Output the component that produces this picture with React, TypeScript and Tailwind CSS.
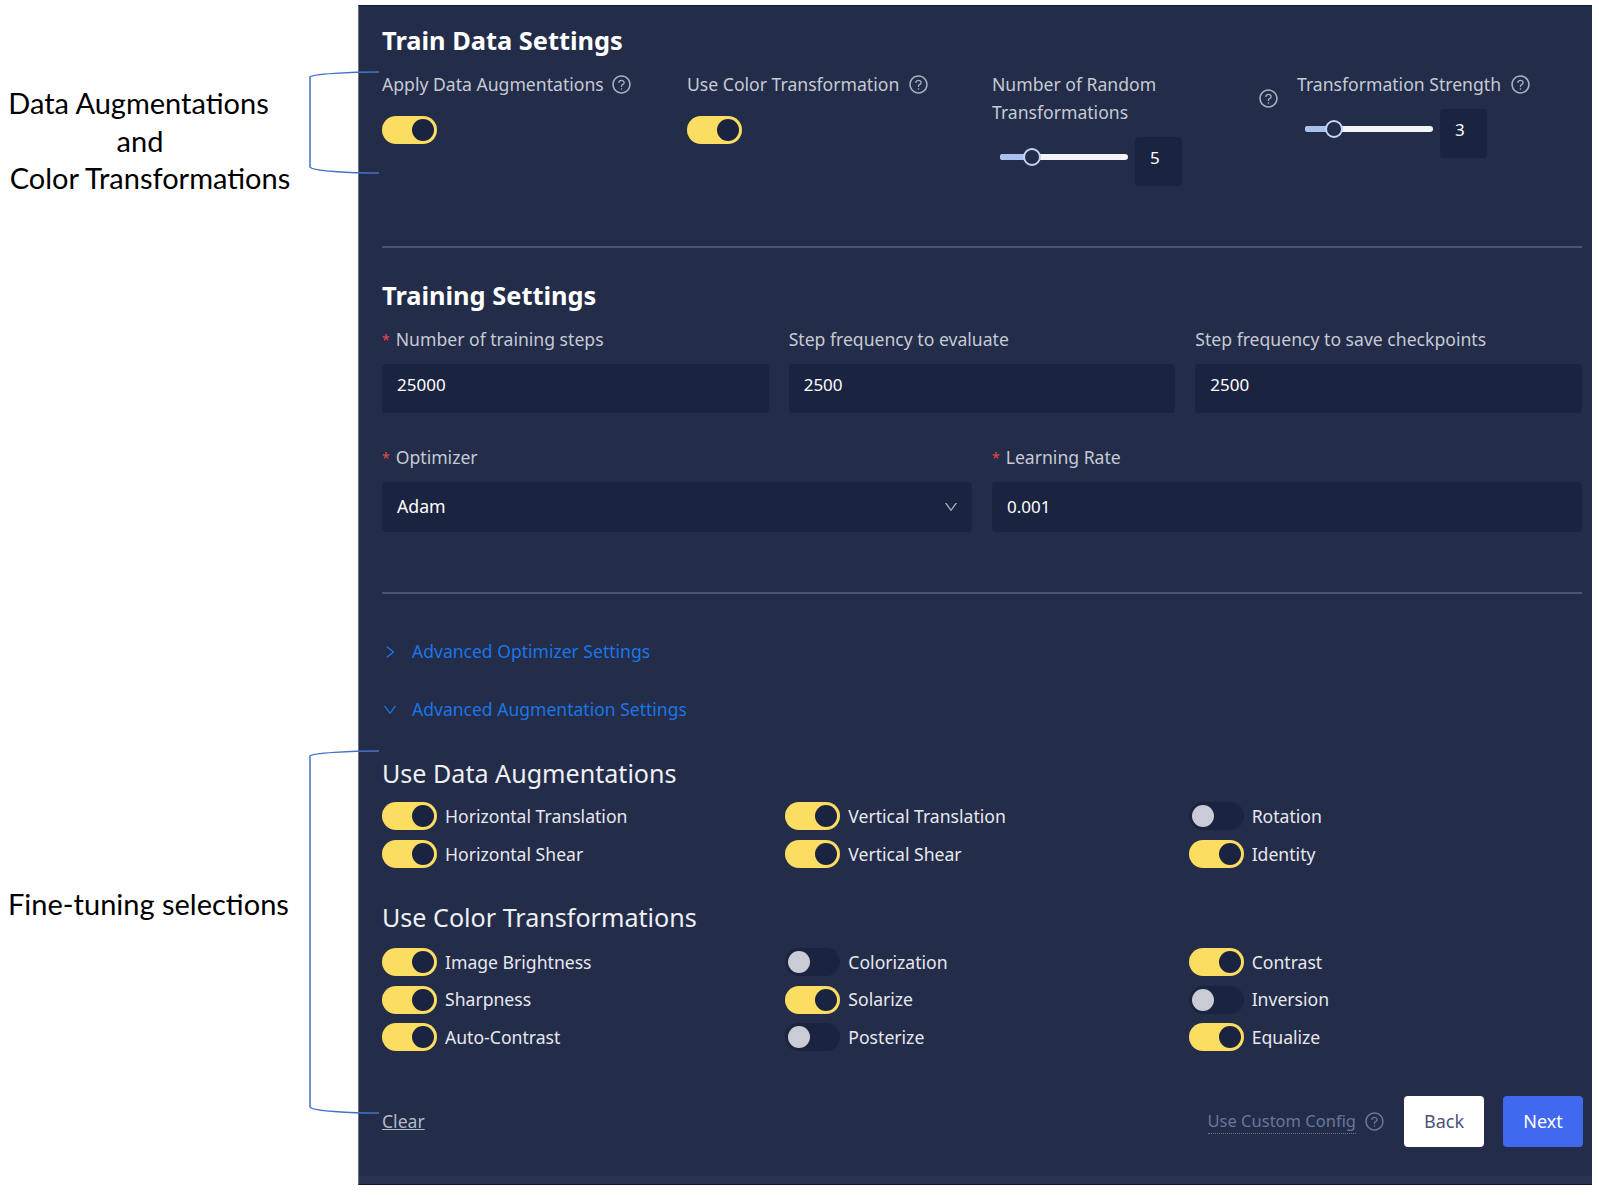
import React from "react";
import { AiOutlineQuestionCircle, AiOutlineRight, AiOutlineDown } from "react-icons/ai";

function Toggle({ on = true }: { on?: boolean }) {
  return on ? (
    <div className="flex h-[28px] w-[55px] shrink-0 items-center justify-end rounded-full bg-[#fbdd62] pr-[3px]">
      <div className="h-[22px] w-[22px] rounded-full bg-[#1a2340]" />
    </div>
  ) : (
    <div className="flex h-[28px] w-[55px] shrink-0 items-center justify-start rounded-full bg-[#1a2340] pl-[3px]">
      <div className="h-[22px] w-[22px] rounded-full bg-[#c9ccd4]" />
    </div>
  );
}

function Help() {
  return <AiOutlineQuestionCircle className="shrink-0 text-[21px] text-[#aab0c0]" />;
}

function Slider({ value, thumb }: { value: string; thumb: number }) {
  return (
    <div className="flex items-start gap-[7px]">
      <div className="relative ml-[8px] mt-[17px] h-[6px] w-[128px] rounded-full bg-[#f2f4f8]">
        <div className="h-[6px] rounded-l-full bg-[#aac1f0]" style={{ width: thumb + 2 }} />
        <div
          className="absolute top-[-6px] h-[18px] w-[18px] rounded-full border-2 border-[#c4d4f5] bg-[#232c49]"
          style={{ left: thumb }}
        />
      </div>
      <div className="flex h-[49px] w-[47px] items-center rounded-sm bg-[#1a2340] pb-[7px] pl-[15px] text-[17px] text-white">{value}</div>
    </div>
  );
}

function Label({ children }: { children: React.ReactNode }) {
  return <div className="flex h-[27px] items-center text-[17.6px] text-[#c6cad4]">{children}</div>;
}

function Req({ children }: { children: React.ReactNode }) {
  return (
    <Label>
      <span className="mr-[6px] text-[14px] text-[#e5484d]">*</span>
      {children}
    </Label>
  );
}

function Field({ children, lift = 0, tall = false }: { children: React.ReactNode; lift?: number; tall?: boolean }) {
  return (
    <div
      className={`flex items-center justify-between rounded-sm bg-[#1a2340] px-[15px] text-[17px] text-white ${tall ? "h-[50px]" : "h-[49px]"}`}
      style={{ paddingBottom: lift }}
    >
      {children}
    </div>
  );
}

function Opt({ label, on = true }: { label: string; on?: boolean }) {
  return (
    <div className="flex items-center gap-[8px] text-[17.6px] text-[#e6e8ee]">
      <Toggle on={on} />
      <span>{label}</span>
    </div>
  );
}

function Heading({ children }: { children: React.ReactNode }) {
  return <h2 className="h-[32px] text-[25.4px] font-bold leading-[32px] text-white">{children}</h2>;
}

export default function App() {
  return (
    <div
      className="relative flex h-[1195px] w-[1599px] overflow-hidden bg-white"
      style={{ fontFamily: '"Noto Sans", sans-serif' }}
    >
      {/* Annotation column */}
      <div
        className="flex w-[358px] shrink-0 flex-col pl-[8px] pt-[84px] text-[29px] leading-[37.5px] text-black"
        style={{ fontFamily: "Lato, sans-serif" }}
      >
        <div className="w-[284px] text-center">
          <div className="pr-[23px]">Data Augmentations</div>
          <div className="pr-[20px]">and</div>
          <div>Color Transformations</div>
        </div>
        <div className="mt-[688px]">Fine-tuning selections</div>
      </div>

      {/* Settings panel */}
      <div className="mt-[5px] flex h-[1180px] w-[1234px] shrink-0 flex-col border-y border-l border-y-[#0d1a3a] border-l-[#6b7286] bg-[#232c49] pl-[23px] pr-[10px] pt-[18px]">
        <Heading>Train Data Settings</Heading>

        <div className="mt-[15px] grid h-[175px] grid-cols-4 gap-x-5">
          <div>
            <Label>
              Apply Data Augmentations <span className="w-[7px]" />
              <Help />
            </Label>
            <div className="mt-[18px]"><Toggle /></div>
          </div>
          <div>
            <Label>
              Use Color Transformation <span className="w-[9px]" />
              <Help />
            </Label>
            <div className="mt-[18px]"><Toggle /></div>
          </div>
          <div>
            <div className="flex w-[287px] items-center justify-between text-[17.6px] leading-[27.5px] text-[#c6cad4]">
              <div className="w-[200px]">Number of Random Transformations</div>
              <Help />
            </div>
            <div className="mt-[11px]"><Slider value="5" thumb={23} /></div>
          </div>
          <div>
            <Label>
              Transformation Strength <span className="w-[9px]" />
              <Help />
            </Label>
            <div className="mt-[11px]"><Slider value="3" thumb={20} /></div>
          </div>
        </div>

        <div className="h-[2px] bg-[#4a5374]" />

        <div className="mt-[31px]"><Heading>Training Settings</Heading></div>

        <div className="mt-[15px] grid grid-cols-3 gap-x-5">
          <div>
            <Req>Number of training steps</Req>
            <div className="mt-[11px]"><Field lift={8}>25000</Field></div>
          </div>
          <div>
            <Label>Step frequency to evaluate</Label>
            <div className="mt-[11px]"><Field lift={8}>2500</Field></div>
          </div>
          <div>
            <Label>Step frequency to save checkpoints</Label>
            <div className="mt-[11px]"><Field lift={8}>2500</Field></div>
          </div>
        </div>

        <div className="mt-[31px] grid grid-cols-2 gap-x-5">
          <div>
            <Req>Optimizer</Req>
            <div className="mt-[11px]">
              <Field lift={1} tall>
                <span className="text-[17.7px]">Adam</span>
                <AiOutlineDown className="mr-[-2px] text-[16px] text-[#aab0c0]" />
              </Field>
            </div>
          </div>
          <div>
            <Req>Learning Rate</Req>
            <div className="mt-[11px]"><Field tall>0.001</Field></div>
          </div>
        </div>

        <div className="mt-[60px] h-[2px] bg-[#4a5374]" />

        <div className="mt-[44px] flex h-[27px] items-center gap-[14px] text-[17.55px] text-[#1b76e6]">
          <AiOutlineRight className="text-[16px]" />
          Advanced Optimizer Settings
        </div>
        <div className="mt-[31px] flex h-[27px] items-center gap-[14px] text-[17.55px] text-[#1b76e6]">
          <AiOutlineDown className="text-[16px]" />
          Advanced Augmentation Settings
        </div>

        <h3 className="mt-[33px] h-[34px] text-[25.1px] leading-[34px] text-[#eef0f5]">Use Data Augmentations</h3>
        <div className="mt-[12px] grid grid-cols-3 gap-x-[10px] gap-y-[10px]">
          <Opt label="Horizontal Translation" />
          <Opt label="Vertical Translation" />
          <Opt label="Rotation" on={false} />
          <Opt label="Horizontal Shear" />
          <Opt label="Vertical Shear" />
          <Opt label="Identity" />
        </div>

        <h3 className="mt-[32px] h-[34px] text-[25.1px] leading-[34px] text-[#eef0f5]">Use Color Transformations</h3>
        <div className="mt-[14px] grid grid-cols-3 gap-x-[10px] gap-y-[9.5px]">
          <Opt label="Image Brightness" />
          <Opt label="Colorization" on={false} />
          <Opt label="Contrast" />
          <Opt label="Sharpness" />
          <Opt label="Solarize" />
          <Opt label="Inversion" on={false} />
          <Opt label="Auto-Contrast" />
          <Opt label="Posterize" on={false} />
          <Opt label="Equalize" />
        </div>

        <div className="mr-[-1px] mt-[45px] flex h-[51px] items-center justify-between">
          <span className="text-[17.6px] text-[#b4b9c6] underline">Clear</span>
          <div className="flex items-center">
            <span className="border-b border-dotted border-[#6a7699] text-[16.5px] leading-[24px] text-[#6a7699]">Use Custom Config</span>
            <AiOutlineQuestionCircle className="ml-[8px] text-[21px] text-[#6a7699]" />
            <div className="ml-[19px] flex h-[51px] w-[80px] items-center justify-center rounded-sm bg-white text-[18px] text-[#4a5374]">Back</div>
            <div className="ml-[19px] flex h-[51px] w-[80px] items-center justify-center rounded-sm bg-[#4169f0] text-[18px] text-white">Next</div>
          </div>
        </div>

        <div className="ml-[-23px] mr-[-10px] mt-auto h-[8px] bg-[#2a3350]" />
      </div>

      {/* Annotation brackets drawn over the page */}
      <svg className="pointer-events-none absolute left-0 top-0" width="1599" height="1195" fill="none" stroke="#4472c4" strokeWidth="1.5">
        <path d="M379 72 C350 72 312 74 310 77 L310 167 C312 171 350 173 379 173" />
        <path d="M379 751 C350 751 312 753 310 756 L310 1107 C312 1111 350 1113 379 1113" />
      </svg>
    </div>
  );
}
